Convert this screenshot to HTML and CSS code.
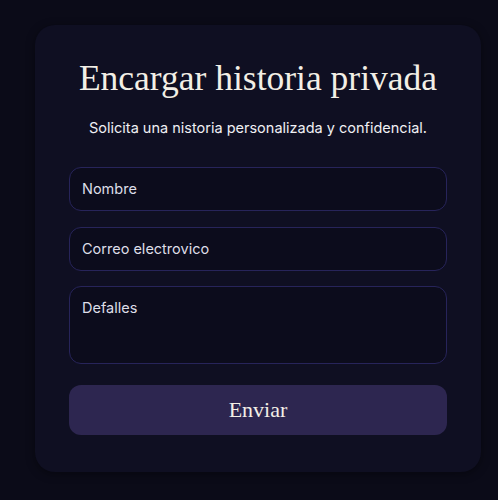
FILE: index.html
```html
<!DOCTYPE html>
<html lang="es">
<head>
<meta charset="utf-8">
<link rel="stylesheet" href="styles.css">
</head>
<body>
<main class="page">
  <section class="card">
    <h1 class="title">Encargar historia privada</h1>
    <p class="subtitle">Solicita una nistoria personalizada y confidencial.</p>
    <form class="form">
      <div class="field">Nombre</div>
      <div class="field">Correo electrovico</div>
      <div class="field area">Defalles</div>
      <button type="button" class="submit">Enviar</button>
    </form>
  </section>
</main>
</body>
</html>
```

FILE: styles.css
```css
html, body {
  margin: 0;
  padding: 0;
  background: #0b0b18;
  height: 100%;
}
.page {
  padding: 25px 17px 0 35px;
}
.card {
  width: 446px;
  box-sizing: border-box;
  height: 447px;
  background: #0f0f22;
  border-radius: 20px;
  padding: 34px 34px 0 34px;
  box-shadow: 0 2px 10px rgba(0,0,0,0.4);
}
.title {
  margin: 0;
  text-align: center;
  font-family: "Liberation Serif", serif;
  font-weight: normal;
  font-size: 35.5px;
  line-height: 38px;
  color: #f3efe6;
}
.subtitle {
  margin: 21px 0 0;
  text-align: center;
  font-family: "Inter", "Liberation Sans", sans-serif;
  font-size: 14.5px;
  line-height: 20px;
  color: #f0f0f4;
}
.form {
  display: flex;
  flex-direction: column;
  gap: 15.5px;
  margin-top: 29px;
}
.field {
  box-sizing: border-box;
  height: 44px;
  border: 1px solid #27245a;
  border-radius: 12px;
  background: #0c0c1c;
  padding: 11px 12px;
  font-family: "Inter", "Liberation Sans", sans-serif;
  font-size: 14.5px;
  line-height: 20px;
  color: #dedee8;
}
.field.area {
  height: 78px;
}
.submit {
  margin-top: 5.5px;
  height: 50px;
  border: none;
  border-radius: 12px;
  background: #2d2650;
  color: #f3efe6;
  font-family: "Liberation Serif", serif;
  font-size: 22px;
  cursor: pointer;
}
```
